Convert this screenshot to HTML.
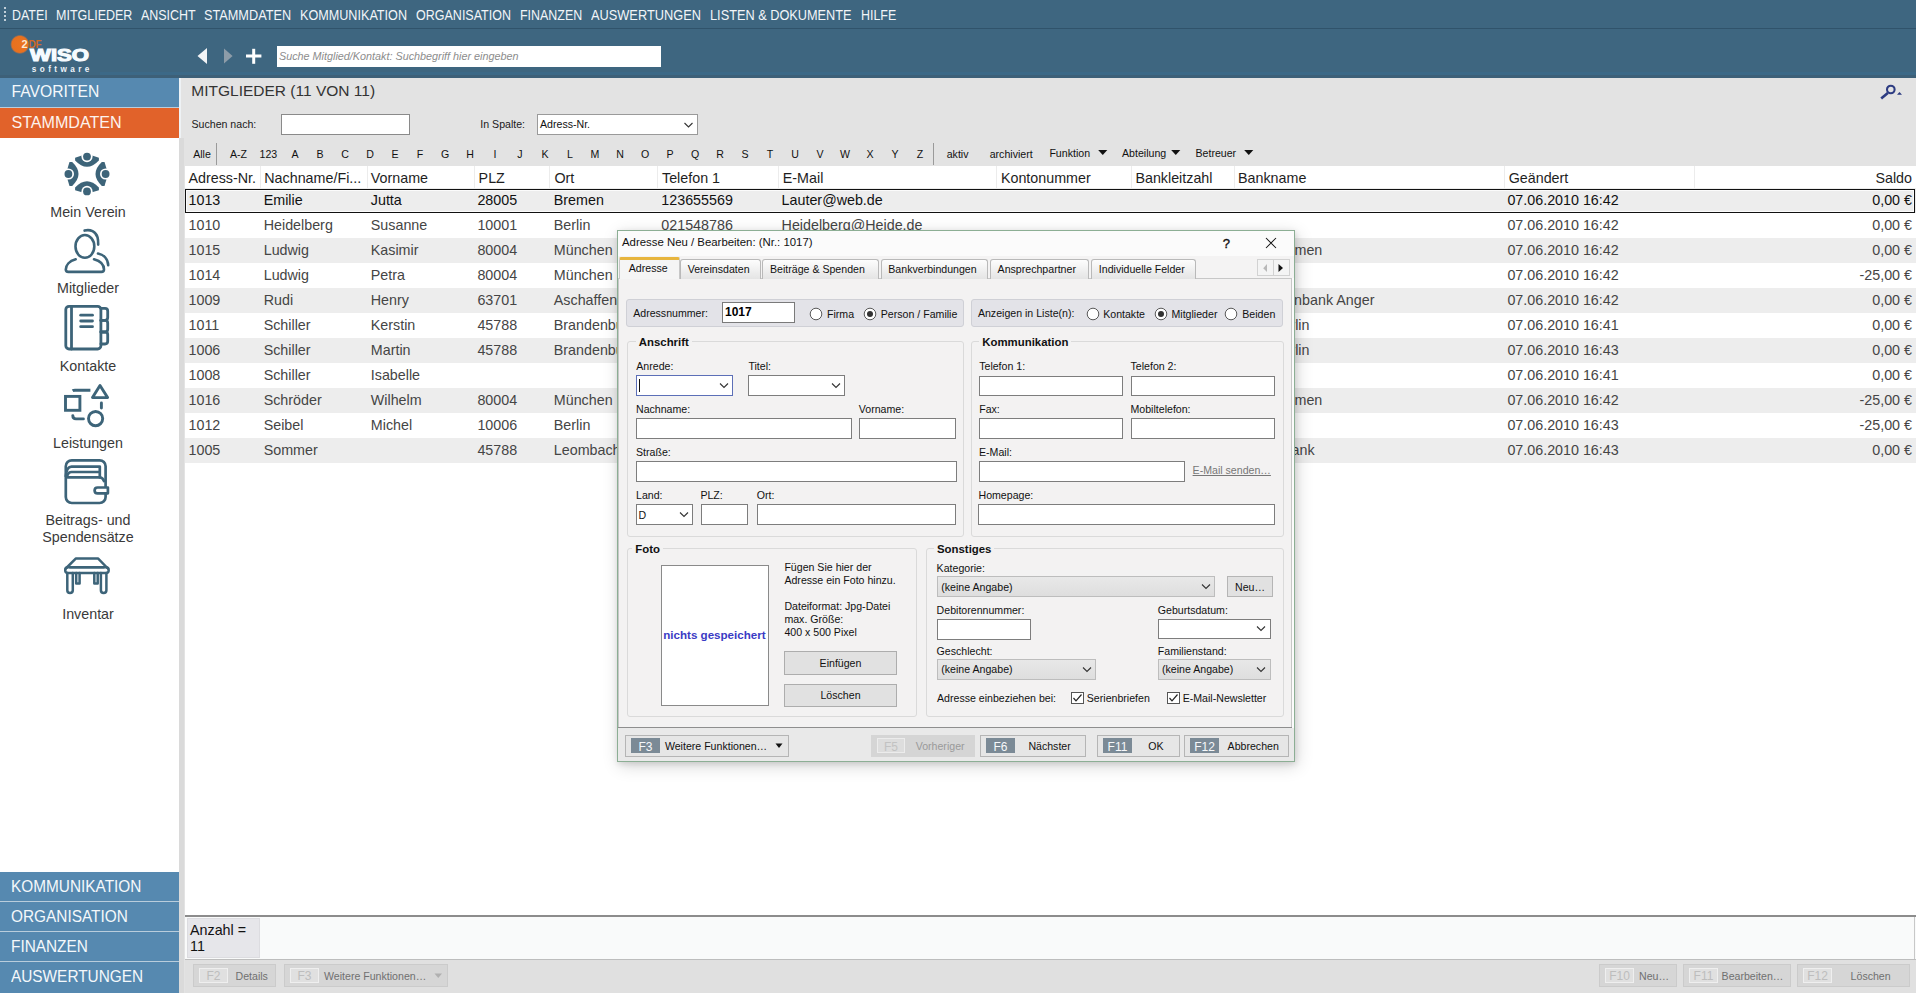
<!DOCTYPE html>
<html><head><meta charset="utf-8"><title>WISO Mein Verein</title>
<style>
html,body{margin:0;padding:0;}
body{width:1916px;height:993px;position:relative;overflow:hidden;background:#e3e3e3;font-family:"Liberation Sans",sans-serif;}
body>div,body>svg{position:absolute;}
</style></head><body>
<div style="left:0px;top:0px;width:1916px;height:28px;background:#3e6680;"></div>
<div style="left:0px;top:28px;width:1916px;height:1px;background:#30536b;"></div>
<div style="left:0px;top:29px;width:1916px;height:49px;background:#3e6680;"></div>
<div style="left:4px;top:7px;width:2px;height:2px;background:#eef3f7;border-radius:1px"></div>
<div style="left:4px;top:11px;width:2px;height:2px;background:#eef3f7;border-radius:1px"></div>
<div style="left:4px;top:15px;width:2px;height:2px;background:#eef3f7;border-radius:1px"></div>
<div style="left:4px;top:19px;width:2px;height:2px;background:#eef3f7;border-radius:1px"></div>
<div style="left:12.00px;top:8.35px;font-size:14px;line-height:14px;color:#f2f5f8;font-weight:normal;white-space:nowrap;transform:scaleX(0.8858200367018134);transform-origin:0 0;">DATEI</div>
<div style="left:56.40px;top:8.35px;font-size:14px;line-height:14px;color:#f2f5f8;font-weight:normal;white-space:nowrap;transform:scaleX(0.8928982304925038);transform-origin:0 0;">MITGLIEDER</div>
<div style="left:140.80px;top:8.35px;font-size:14px;line-height:14px;color:#f2f5f8;font-weight:normal;white-space:nowrap;transform:scaleX(0.8901681779115831);transform-origin:0 0;">ANSICHT</div>
<div style="left:204.30px;top:8.35px;font-size:14px;line-height:14px;color:#f2f5f8;font-weight:normal;white-space:nowrap;transform:scaleX(0.9080306238801105);transform-origin:0 0;">STAMMDATEN</div>
<div style="left:300.20px;top:8.35px;font-size:14px;line-height:14px;color:#f2f5f8;font-weight:normal;white-space:nowrap;transform:scaleX(0.9011308876823514);transform-origin:0 0;">KOMMUNIKATION</div>
<div style="left:416.30px;top:8.35px;font-size:14px;line-height:14px;color:#f2f5f8;font-weight:normal;white-space:nowrap;transform:scaleX(0.8936471681085546);transform-origin:0 0;">ORGANISATION</div>
<div style="left:520.20px;top:8.35px;font-size:14px;line-height:14px;color:#f2f5f8;font-weight:normal;white-space:nowrap;transform:scaleX(0.8885714285714276);transform-origin:0 0;">FINANZEN</div>
<div style="left:591.30px;top:8.35px;font-size:14px;line-height:14px;color:#f2f5f8;font-weight:normal;white-space:nowrap;transform:scaleX(0.9134877631913895);transform-origin:0 0;">AUSWERTUNGEN</div>
<div style="left:710.20px;top:8.35px;font-size:14px;line-height:14px;color:#f2f5f8;font-weight:normal;white-space:nowrap;transform:scaleX(0.9101463481261569);transform-origin:0 0;">LISTEN &amp; DOKUMENTE</div>
<div style="left:860.80px;top:8.35px;font-size:14px;line-height:14px;color:#f2f5f8;font-weight:normal;white-space:nowrap;transform:scaleX(0.8872155577784966);transform-origin:0 0;">HILFE</div>
<svg style="position:absolute;left:4px;top:30px;" width="40" height="30" viewBox="0 0 40 30"><defs><radialGradient id="og" cx="0.5" cy="0.5" r="0.5">
<stop offset="0" stop-color="#ea7420"/><stop offset="0.8" stop-color="#e8711f"/><stop offset="0.9" stop-color="#c8703a" stop-opacity="0.5"/><stop offset="1" stop-color="#3e6680" stop-opacity="0"/></radialGradient></defs>
<circle cx="15.9" cy="14.4" r="10" fill="url(#og)"/></svg>
<div style="left:21.60px;top:39.19px;font-size:11px;line-height:11px;color:#fdebd2;font-weight:bold;white-space:nowrap;">2</div>
<div style="left:28.40px;top:39.94px;font-size:10px;line-height:10px;color:#d26a26;font-weight:bold;white-space:nowrap;letter-spacing:-0.2px">DF</div>
<div style="left:30.30px;top:48.25px;font-size:16.6px;line-height:16.6px;color:#f6fbff;font-weight:bold;white-space:nowrap;transform:scaleX(1.332883391058668);transform-origin:0 0;-webkit-text-stroke:1.1px #f6fbff">WISO</div>
<div style="left:31.80px;top:66.26px;font-size:8.2px;line-height:8.2px;color:#eef4fa;font-weight:bold;white-space:nowrap;letter-spacing:3.4px">software</div>
<svg style="position:absolute;left:190px;top:44px;" width="80" height="24" viewBox="0 0 80 24">
<path d="M7.5 12 L17 4 L17 20 Z" fill="#f2f4f6"/>
<path d="M34 4.5 L42.6 12 L34 19.5 Z" fill="#8d9ca8"/>
<rect x="56" y="10.5" width="15.4" height="3" fill="#fff"/>
<rect x="62.2" y="4.8" width="3" height="15" fill="#fff"/>
</svg>
<div style="left:277px;top:46px;width:384px;height:21px;background:#fff;"></div>
<div style="left:100px;top:72px;width:1816px;height:3px;background:#3c6987;"></div>
<div style="left:0px;top:75px;width:1916px;height:3px;background:#3d6078;"></div>
<div style="left:279.00px;top:50.86px;font-size:10.8px;line-height:10.8px;color:#8c8c8c;font-weight:normal;white-space:nowrap;font-style:italic">Suche Mitglied/Kontakt: Suchbegriff hier eingeben</div>
<div style="left:0px;top:78px;width:179px;height:29px;background:#5689b0;"></div>
<div style="left:0px;top:107px;width:179px;height:1px;background:#b9cddc;"></div>
<div style="left:0px;top:108px;width:179px;height:30px;background:#e1622a;"></div>
<div style="left:0px;top:138px;width:179px;height:734px;background:#ffffff;"></div>
<div style="left:11.50px;top:84.41px;font-size:15.7px;line-height:15.7px;color:#f4f8fb;font-weight:normal;white-space:nowrap;">FAVORITEN</div>
<div style="left:11.40px;top:114.27px;font-size:16.1px;line-height:16.1px;color:#fdf3ee;font-weight:normal;white-space:nowrap;">STAMMDATEN</div>
<div style="left:0px;top:872px;width:179px;height:29px;background:#5689b0;"></div>
<div style="left:0px;top:901px;width:179px;height:1px;background:#b9cddc;"></div>
<div style="left:11.00px;top:878.91px;font-size:15.7px;line-height:15.7px;color:#f4f8fb;font-weight:normal;white-space:nowrap;transform:scaleX(0.98);transform-origin:0 0;">KOMMUNIKATION</div>
<div style="left:0px;top:902px;width:179px;height:29px;background:#5689b0;"></div>
<div style="left:0px;top:931px;width:179px;height:1px;background:#b9cddc;"></div>
<div style="left:11.00px;top:908.91px;font-size:15.7px;line-height:15.7px;color:#f4f8fb;font-weight:normal;white-space:nowrap;transform:scaleX(0.98);transform-origin:0 0;">ORGANISATION</div>
<div style="left:0px;top:932px;width:179px;height:29px;background:#5689b0;"></div>
<div style="left:0px;top:961px;width:179px;height:1px;background:#b9cddc;"></div>
<div style="left:11.00px;top:938.91px;font-size:15.7px;line-height:15.7px;color:#f4f8fb;font-weight:normal;white-space:nowrap;transform:scaleX(0.98);transform-origin:0 0;">FINANZEN</div>
<div style="left:0px;top:962px;width:179px;height:31px;background:#5689b0;"></div>
<div style="left:11.00px;top:968.91px;font-size:15.7px;line-height:15.7px;color:#f4f8fb;font-weight:normal;white-space:nowrap;transform:scaleX(0.98);transform-origin:0 0;">AUSWERTUNGEN</div>
<div style="left:179px;top:138px;width:5px;height:855px;background:#dadada;"></div>
<div style="left:179px;top:78px;width:2px;height:60px;background:#eef2f5;"></div>
<svg style="position:absolute;left:60px;top:147px;" width="54" height="54" viewBox="0 0 54 54"><g transform="translate(27,27)"><g transform="translate(0,0) rotate(0)"><path d="M-11.9,-16.3 Q0,-21.1 11.9,-16.3 L11.9,-13.6 Q0,-1.0 -11.9,-13.6 Z" fill="#3d6479"/><circle cx="0" cy="-17.4" r="5.6" fill="#fff"/><circle cx="0" cy="-17.4" r="3.9" fill="#3d6479"/></g><g transform="translate(1.2,0) rotate(90)"><path d="M-11.9,-16.3 Q0,-21.1 11.9,-16.3 L11.9,-13.6 Q0,-1.0 -11.9,-13.6 Z" fill="#3d6479"/><circle cx="0" cy="-17.4" r="5.6" fill="#fff"/><circle cx="0" cy="-17.4" r="3.9" fill="#3d6479"/></g><g transform="translate(0,0) rotate(180)"><path d="M-11.9,-16.3 Q0,-21.1 11.9,-16.3 L11.9,-13.6 Q0,-1.0 -11.9,-13.6 Z" fill="#3d6479"/><circle cx="0" cy="-17.4" r="5.6" fill="#fff"/><circle cx="0" cy="-17.4" r="3.9" fill="#3d6479"/></g><g transform="translate(-1.2,0) rotate(270)"><path d="M-11.9,-16.3 Q0,-21.1 11.9,-16.3 L11.9,-13.6 Q0,-1.0 -11.9,-13.6 Z" fill="#3d6479"/><circle cx="0" cy="-17.4" r="5.6" fill="#fff"/><circle cx="0" cy="-17.4" r="3.9" fill="#3d6479"/></g></g></svg>
<div style="left:0.00px;top:204.75px;font-size:14px;line-height:14px;color:#222;font-weight:normal;white-space:nowrap;"></div>
<div style="left:-12.00px;top:204.50px;width:200px;text-align:center;font-size:14.3px;line-height:14.3px;color:#3a3a3a;font-weight:normal;white-space:nowrap;">Mein Verein</div>
<svg style="position:absolute;left:60px;top:225px;" width="54" height="52" viewBox="0 0 54 52"><g fill="none" stroke="#3d6479" stroke-width="2.6" stroke-linecap="round">
<ellipse cx="24.9" cy="21.4" rx="9.4" ry="11.4"/>
<path d="M15.7,34.3 C9,36 5.8,40.5 5.8,44.6 Q5.8,46.9 8.4,46.9 L41.4,46.9 Q44,46.9 44,44.6 C44,40 40.5,36 34,34.3"/>
<path d="M24.6,5.6 C30,4 36,6.5 37.6,12.5 C38.2,15 38.2,17.5 38.2,19.6"/>
<path d="M38,28.5 C43.5,29.6 48,33.6 48.2,40.3"/>
</g></svg>
<div style="left:-12.00px;top:281.10px;width:200px;text-align:center;font-size:14.3px;line-height:14.3px;color:#3a3a3a;font-weight:normal;white-space:nowrap;">Mitglieder</div>
<svg style="position:absolute;left:60px;top:300px;" width="54" height="52" viewBox="0 0 54 52"><g fill="none" stroke="#3d6479" stroke-width="2.8" stroke-linecap="round" stroke-linejoin="round">
<rect x="5.8" y="6.3" width="35.1" height="42.7" rx="3.2"/>
<line x1="11.5" y1="6.3" x2="11.5" y2="49"/>
<line x1="20.7" y1="15.2" x2="32.5" y2="15.2"/>
<line x1="20.7" y1="21" x2="32.5" y2="21"/>
<line x1="20.7" y1="26.7" x2="32.5" y2="26.7"/>
<path d="M40.9,8.4 L45,8.4 Q47.7,8.4 47.7,11 L47.7,17.6 Q47.7,20.4 45,20.4 L40.9,20.4"/>
<path d="M40.9,20.4 L45,20.4 Q47.7,20.4 47.7,23 L47.7,29.3 Q47.7,32 45,32 L40.9,32"/>
<path d="M40.9,32 L45,32 Q47.7,32 47.7,34.6 L47.7,41.3 Q47.7,44 45,44 L40.9,44"/>
</g></svg>
<div style="left:-12.00px;top:358.70px;width:200px;text-align:center;font-size:14.3px;line-height:14.3px;color:#3a3a3a;font-weight:normal;white-space:nowrap;">Kontakte</div>
<svg style="position:absolute;left:60px;top:377px;" width="54" height="52" viewBox="0 0 54 52"><g fill="none" stroke="#3d6479" stroke-width="2.9" stroke-linecap="round" stroke-linejoin="miter">
<rect x="5.5" y="19.4" width="14.4" height="13.9"/>
<path d="M12.6,13.8 Q13.5,13.2 15,13.2 L30.4,13.2" stroke-linecap="butt"/>
<path d="M40,8.4 L47.6,20.6 L32.5,20.6 Z" stroke-linejoin="round"/>
<line x1="41.4" y1="26" x2="41.4" y2="31"/>
<circle cx="35.6" cy="41.6" r="7.1"/>
<path d="M12.8,38.6 Q12.8,41.9 16,41.9 L23.4,41.9"/>
</g></svg>
<div style="left:-12.00px;top:435.90px;width:200px;text-align:center;font-size:14.3px;line-height:14.3px;color:#3a3a3a;font-weight:normal;white-space:nowrap;">Leistungen</div>
<svg style="position:absolute;left:60px;top:454px;" width="54" height="52" viewBox="0 0 54 52"><g fill="none" stroke="#3d6479" stroke-width="2.7" stroke-linecap="round" stroke-linejoin="round">
<rect x="5.8" y="6.3" width="39.8" height="42.7" rx="6"/>
<path d="M5.8,22 Q6.5,12.6 11.5,12.6 L39.8,12.6 L39.8,23.4"/>
<path d="M7.5,21 Q8.5,18 11.5,18 L38.8,18"/>
<path d="M7.5,23.3 L39.8,23.3 Q43,24 44,27"/>
<path d="M47.9,33.5 L37.6,33.5 Q34.6,33.5 34.6,36.4 Q34.6,39.3 37.6,39.3 L47.9,39.3 Z" fill="#fff"/>
</g></svg>
<div style="left:-12.00px;top:512.50px;width:200px;text-align:center;font-size:14.3px;line-height:14.3px;color:#3a3a3a;font-weight:normal;white-space:nowrap;">Beitrags- und</div>
<div style="left:-12.00px;top:529.50px;width:200px;text-align:center;font-size:14.3px;line-height:14.3px;color:#3a3a3a;font-weight:normal;white-space:nowrap;">Spendensätze</div>
<svg style="position:absolute;left:60px;top:550px;" width="54" height="52" viewBox="0 0 54 52"><g fill="none" stroke="#3d6479" stroke-width="2.5" stroke-linecap="round" stroke-linejoin="round">
<path d="M5.8,18.5 L15.7,8.6 L38.2,8.6 L47.9,18.5"/>
<line x1="10" y1="17.3" x2="43.6" y2="17.3"/>
<rect x="5.2" y="17.3" width="43.5" height="5.7" rx="2.85"/>
<path d="M7.3,23 L7.3,40.3 Q7.3,43 10,43 Q12.8,43 12.8,40.3 L12.8,23"/>
<path d="M40.9,23 L40.9,40.3 Q40.9,43 43.6,43 Q46.4,43 46.4,40.3 L46.4,23"/>
<path d="M16.2,23 L16.2,33.4 L19.6,33.4 L19.6,23"/>
<path d="M34.3,23 L34.3,33.4 L37.7,33.4 L37.7,23"/>
</g></svg>
<div style="left:-12.00px;top:606.70px;width:200px;text-align:center;font-size:14.3px;line-height:14.3px;color:#3a3a3a;font-weight:normal;white-space:nowrap;">Inventar</div>
<div style="left:185px;top:78px;width:1731px;height:88px;background:#e3e3e3;"></div>
<div style="left:191.30px;top:82.68px;font-size:15.5px;line-height:15.5px;color:#333;font-weight:normal;white-space:nowrap;">MITGLIEDER (11 VON 11)</div>
<svg style="position:absolute;left:1878px;top:83px;" width="28" height="20" viewBox="0 0 28 20"><g fill="none" stroke="#2d3c82"><circle cx="12.8" cy="6.5" r="3.8" stroke-width="2.1"/><line x1="9.8" y1="10" x2="3.2" y2="15.6" stroke-width="2.6"/></g><path d="M19.0 11.7 L24.0 11.7 L21.5 9.0 Z" fill="#2d3c82"/></svg>
<div style="left:191.50px;top:118.73px;font-size:10.6px;line-height:10.6px;color:#1a1a1a;font-weight:normal;white-space:nowrap;">Suchen nach:</div>
<div style="left:281px;top:114px;width:129px;height:21px;background:#fff;border:1px solid #8a8a8a;box-sizing:border-box;"></div>
<div style="left:480.30px;top:119.23px;font-size:10.6px;line-height:10.6px;color:#1a1a1a;font-weight:normal;white-space:nowrap;">In Spalte:</div>
<div style="left:537px;top:114px;width:161px;height:21px;background:#fff;border:1px solid #9a9a9a;box-sizing:border-box;"></div>
<div style="left:540.00px;top:119.23px;font-size:10.6px;line-height:10.6px;color:#111;font-weight:normal;white-space:nowrap;">Adress-Nr.</div>
<svg style="position:absolute;left:683px;top:120px;" width="12" height="10" viewBox="0 0 12 10"><path d="M1.5 3 L5.5 7 L9.5 3" fill="none" stroke="#333" stroke-width="1.1"/></svg>
<div style="left:193.20px;top:148.93px;font-size:10.6px;line-height:10.6px;color:#111;font-weight:normal;white-space:nowrap;">Alle</div>
<div style="left:216px;top:143px;width:1px;height:22px;background:#9a9a9a;"></div>
<div style="left:230.00px;top:148.93px;font-size:10.6px;line-height:10.6px;color:#111;font-weight:normal;white-space:nowrap;">A-Z</div>
<div style="left:259.50px;top:148.93px;font-size:10.6px;line-height:10.6px;color:#111;font-weight:normal;white-space:nowrap;">123</div>
<div style="left:285.00px;top:148.93px;width:20px;text-align:center;font-size:10.6px;line-height:10.6px;color:#111;font-weight:normal;white-space:nowrap;">A</div>
<div style="left:310.00px;top:148.93px;width:20px;text-align:center;font-size:10.6px;line-height:10.6px;color:#111;font-weight:normal;white-space:nowrap;">B</div>
<div style="left:335.00px;top:148.93px;width:20px;text-align:center;font-size:10.6px;line-height:10.6px;color:#111;font-weight:normal;white-space:nowrap;">C</div>
<div style="left:360.00px;top:148.93px;width:20px;text-align:center;font-size:10.6px;line-height:10.6px;color:#111;font-weight:normal;white-space:nowrap;">D</div>
<div style="left:385.00px;top:148.93px;width:20px;text-align:center;font-size:10.6px;line-height:10.6px;color:#111;font-weight:normal;white-space:nowrap;">E</div>
<div style="left:410.00px;top:148.93px;width:20px;text-align:center;font-size:10.6px;line-height:10.6px;color:#111;font-weight:normal;white-space:nowrap;">F</div>
<div style="left:435.00px;top:148.93px;width:20px;text-align:center;font-size:10.6px;line-height:10.6px;color:#111;font-weight:normal;white-space:nowrap;">G</div>
<div style="left:460.00px;top:148.93px;width:20px;text-align:center;font-size:10.6px;line-height:10.6px;color:#111;font-weight:normal;white-space:nowrap;">H</div>
<div style="left:485.00px;top:148.93px;width:20px;text-align:center;font-size:10.6px;line-height:10.6px;color:#111;font-weight:normal;white-space:nowrap;">I</div>
<div style="left:510.00px;top:148.93px;width:20px;text-align:center;font-size:10.6px;line-height:10.6px;color:#111;font-weight:normal;white-space:nowrap;">J</div>
<div style="left:535.00px;top:148.93px;width:20px;text-align:center;font-size:10.6px;line-height:10.6px;color:#111;font-weight:normal;white-space:nowrap;">K</div>
<div style="left:560.00px;top:148.93px;width:20px;text-align:center;font-size:10.6px;line-height:10.6px;color:#111;font-weight:normal;white-space:nowrap;">L</div>
<div style="left:585.00px;top:148.93px;width:20px;text-align:center;font-size:10.6px;line-height:10.6px;color:#111;font-weight:normal;white-space:nowrap;">M</div>
<div style="left:610.00px;top:148.93px;width:20px;text-align:center;font-size:10.6px;line-height:10.6px;color:#111;font-weight:normal;white-space:nowrap;">N</div>
<div style="left:635.00px;top:148.93px;width:20px;text-align:center;font-size:10.6px;line-height:10.6px;color:#111;font-weight:normal;white-space:nowrap;">O</div>
<div style="left:660.00px;top:148.93px;width:20px;text-align:center;font-size:10.6px;line-height:10.6px;color:#111;font-weight:normal;white-space:nowrap;">P</div>
<div style="left:685.00px;top:148.93px;width:20px;text-align:center;font-size:10.6px;line-height:10.6px;color:#111;font-weight:normal;white-space:nowrap;">Q</div>
<div style="left:710.00px;top:148.93px;width:20px;text-align:center;font-size:10.6px;line-height:10.6px;color:#111;font-weight:normal;white-space:nowrap;">R</div>
<div style="left:735.00px;top:148.93px;width:20px;text-align:center;font-size:10.6px;line-height:10.6px;color:#111;font-weight:normal;white-space:nowrap;">S</div>
<div style="left:760.00px;top:148.93px;width:20px;text-align:center;font-size:10.6px;line-height:10.6px;color:#111;font-weight:normal;white-space:nowrap;">T</div>
<div style="left:785.00px;top:148.93px;width:20px;text-align:center;font-size:10.6px;line-height:10.6px;color:#111;font-weight:normal;white-space:nowrap;">U</div>
<div style="left:810.00px;top:148.93px;width:20px;text-align:center;font-size:10.6px;line-height:10.6px;color:#111;font-weight:normal;white-space:nowrap;">V</div>
<div style="left:835.00px;top:148.93px;width:20px;text-align:center;font-size:10.6px;line-height:10.6px;color:#111;font-weight:normal;white-space:nowrap;">W</div>
<div style="left:860.00px;top:148.93px;width:20px;text-align:center;font-size:10.6px;line-height:10.6px;color:#111;font-weight:normal;white-space:nowrap;">X</div>
<div style="left:885.00px;top:148.93px;width:20px;text-align:center;font-size:10.6px;line-height:10.6px;color:#111;font-weight:normal;white-space:nowrap;">Y</div>
<div style="left:910.00px;top:148.93px;width:20px;text-align:center;font-size:10.6px;line-height:10.6px;color:#111;font-weight:normal;white-space:nowrap;">Z</div>
<div style="left:933px;top:143px;width:1px;height:22px;background:#9a9a9a;"></div>
<div style="left:946.70px;top:148.93px;font-size:10.6px;line-height:10.6px;color:#111;font-weight:normal;white-space:nowrap;">aktiv</div>
<div style="left:989.70px;top:148.93px;font-size:10.6px;line-height:10.6px;color:#111;font-weight:normal;white-space:nowrap;">archiviert</div>
<div style="left:1049.40px;top:148.23px;font-size:10.6px;line-height:10.6px;color:#111;font-weight:normal;white-space:nowrap;">Funktion</div>
<svg style="position:absolute;left:1098px;top:149px;" width="10" height="7" viewBox="0 0 10 7"><path d="M0.2 1 L9.3 1 L4.75 6 Z" fill="#111"/></svg>
<div style="left:1122.00px;top:148.23px;font-size:10.6px;line-height:10.6px;color:#111;font-weight:normal;white-space:nowrap;">Abteilung</div>
<svg style="position:absolute;left:1171px;top:149px;" width="10" height="7" viewBox="0 0 10 7"><path d="M0.2 1 L9.3 1 L4.75 6 Z" fill="#111"/></svg>
<div style="left:1195.50px;top:148.23px;font-size:10.6px;line-height:10.6px;color:#111;font-weight:normal;white-space:nowrap;">Betreuer</div>
<svg style="position:absolute;left:1244px;top:149px;" width="10" height="7" viewBox="0 0 10 7"><path d="M0.2 1 L9.3 1 L4.75 6 Z" fill="#111"/></svg>
<div style="left:185px;top:166px;width:1731px;height:749px;background:#ffffff;"></div>
<div style="left:260px;top:166px;width:1px;height:22px;background:#ececec;"></div>
<div style="left:367px;top:166px;width:1px;height:22px;background:#ececec;"></div>
<div style="left:474px;top:166px;width:1px;height:22px;background:#ececec;"></div>
<div style="left:549px;top:166px;width:1px;height:22px;background:#ececec;"></div>
<div style="left:657px;top:166px;width:1px;height:22px;background:#ececec;"></div>
<div style="left:778px;top:166px;width:1px;height:22px;background:#ececec;"></div>
<div style="left:996px;top:166px;width:1px;height:22px;background:#ececec;"></div>
<div style="left:1131px;top:166px;width:1px;height:22px;background:#ececec;"></div>
<div style="left:1234px;top:166px;width:1px;height:22px;background:#ececec;"></div>
<div style="left:1504px;top:166px;width:1px;height:22px;background:#ececec;"></div>
<div style="left:1694px;top:166px;width:1px;height:22px;background:#ececec;"></div>
<div style="left:188.50px;top:171.10px;font-size:14.3px;line-height:14.3px;color:#1e1e1e;font-weight:normal;white-space:nowrap;">Adress-Nr.</div>
<div style="left:264.30px;top:171.10px;font-size:14.3px;line-height:14.3px;color:#1e1e1e;font-weight:normal;white-space:nowrap;">Nachname/Fi...</div>
<div style="left:370.80px;top:171.10px;font-size:14.3px;line-height:14.3px;color:#1e1e1e;font-weight:normal;white-space:nowrap;">Vorname</div>
<div style="left:478.60px;top:171.10px;font-size:14.3px;line-height:14.3px;color:#1e1e1e;font-weight:normal;white-space:nowrap;">PLZ</div>
<div style="left:554.40px;top:171.10px;font-size:14.3px;line-height:14.3px;color:#1e1e1e;font-weight:normal;white-space:nowrap;">Ort</div>
<div style="left:662.00px;top:171.10px;font-size:14.3px;line-height:14.3px;color:#1e1e1e;font-weight:normal;white-space:nowrap;">Telefon 1</div>
<div style="left:782.80px;top:171.10px;font-size:14.3px;line-height:14.3px;color:#1e1e1e;font-weight:normal;white-space:nowrap;">E-Mail</div>
<div style="left:1000.90px;top:171.10px;font-size:14.3px;line-height:14.3px;color:#1e1e1e;font-weight:normal;white-space:nowrap;">Kontonummer</div>
<div style="left:1135.40px;top:171.10px;font-size:14.3px;line-height:14.3px;color:#1e1e1e;font-weight:normal;white-space:nowrap;">Bankleitzahl</div>
<div style="left:1238.00px;top:171.10px;font-size:14.3px;line-height:14.3px;color:#1e1e1e;font-weight:normal;white-space:nowrap;">Bankname</div>
<div style="left:1508.70px;top:171.10px;font-size:14.3px;line-height:14.3px;color:#1e1e1e;font-weight:normal;white-space:nowrap;">Geändert</div>
<div style="right:4.00px;top:171.10px;font-size:14.3px;line-height:14.3px;color:#1e1e1e;font-weight:normal;white-space:nowrap;text-align:right;">Saldo</div>
<div style="left:185px;top:188px;width:1731px;height:25px;background:#ededed;"></div>
<div style="left:188.50px;top:192.90px;font-size:14.3px;line-height:14.3px;color:#111;font-weight:normal;white-space:nowrap;">1013</div>
<div style="left:263.70px;top:192.90px;font-size:14.3px;line-height:14.3px;color:#111;font-weight:normal;white-space:nowrap;">Emilie</div>
<div style="left:370.80px;top:192.90px;font-size:14.3px;line-height:14.3px;color:#111;font-weight:normal;white-space:nowrap;">Jutta</div>
<div style="left:477.40px;top:192.90px;font-size:14.3px;line-height:14.3px;color:#111;font-weight:normal;white-space:nowrap;">28005</div>
<div style="left:553.80px;top:192.90px;font-size:14.3px;line-height:14.3px;color:#111;font-weight:normal;white-space:nowrap;">Bremen</div>
<div style="left:661.30px;top:192.90px;font-size:14.3px;line-height:14.3px;color:#111;font-weight:normal;white-space:nowrap;">123655569</div>
<div style="left:781.60px;top:192.90px;font-size:14.3px;line-height:14.3px;color:#111;font-weight:normal;white-space:nowrap;">Lauter@web.de</div>
<div style="left:1507.40px;top:192.90px;font-size:14.3px;line-height:14.3px;color:#111;font-weight:normal;white-space:nowrap;">07.06.2010 16:42</div>
<div style="right:4.00px;top:192.90px;font-size:14.3px;line-height:14.3px;color:#111;font-weight:normal;white-space:nowrap;text-align:right;">0,00 €</div>
<div style="left:188.50px;top:217.90px;font-size:14.3px;line-height:14.3px;color:#454545;font-weight:normal;white-space:nowrap;">1010</div>
<div style="left:263.70px;top:217.90px;font-size:14.3px;line-height:14.3px;color:#454545;font-weight:normal;white-space:nowrap;">Heidelberg</div>
<div style="left:370.80px;top:217.90px;font-size:14.3px;line-height:14.3px;color:#454545;font-weight:normal;white-space:nowrap;">Susanne</div>
<div style="left:477.40px;top:217.90px;font-size:14.3px;line-height:14.3px;color:#454545;font-weight:normal;white-space:nowrap;">10001</div>
<div style="left:553.80px;top:217.90px;font-size:14.3px;line-height:14.3px;color:#454545;font-weight:normal;white-space:nowrap;">Berlin</div>
<div style="left:661.30px;top:217.90px;font-size:14.3px;line-height:14.3px;color:#454545;font-weight:normal;white-space:nowrap;">021548786</div>
<div style="left:781.60px;top:217.90px;font-size:14.3px;line-height:14.3px;color:#454545;font-weight:normal;white-space:nowrap;">Heidelberg@Heide.de</div>
<div style="left:1507.40px;top:217.90px;font-size:14.3px;line-height:14.3px;color:#454545;font-weight:normal;white-space:nowrap;">07.06.2010 16:42</div>
<div style="right:4.00px;top:217.90px;font-size:14.3px;line-height:14.3px;color:#454545;font-weight:normal;white-space:nowrap;text-align:right;">0,00 €</div>
<div style="left:185px;top:238px;width:1731px;height:25px;background:#ededed;"></div>
<div style="left:188.50px;top:242.90px;font-size:14.3px;line-height:14.3px;color:#454545;font-weight:normal;white-space:nowrap;">1015</div>
<div style="left:263.70px;top:242.90px;font-size:14.3px;line-height:14.3px;color:#454545;font-weight:normal;white-space:nowrap;">Ludwig</div>
<div style="left:370.80px;top:242.90px;font-size:14.3px;line-height:14.3px;color:#454545;font-weight:normal;white-space:nowrap;">Kasimir</div>
<div style="left:477.40px;top:242.90px;font-size:14.3px;line-height:14.3px;color:#454545;font-weight:normal;white-space:nowrap;">80004</div>
<div style="left:553.80px;top:242.90px;font-size:14.3px;line-height:14.3px;color:#454545;font-weight:normal;white-space:nowrap;">München</div>
<div style="left:661.30px;top:242.90px;font-size:14.3px;line-height:14.3px;color:#454545;font-weight:normal;white-space:nowrap;"></div>
<div style="left:781.60px;top:242.90px;font-size:14.3px;line-height:14.3px;color:#454545;font-weight:normal;white-space:nowrap;"></div>
<div style="right:593.70px;top:242.90px;font-size:14.3px;line-height:14.3px;color:#454545;font-weight:normal;white-space:nowrap;text-align:right;">Stadtsparkasse Bremen</div>
<div style="left:1507.40px;top:242.90px;font-size:14.3px;line-height:14.3px;color:#454545;font-weight:normal;white-space:nowrap;">07.06.2010 16:42</div>
<div style="right:4.00px;top:242.90px;font-size:14.3px;line-height:14.3px;color:#454545;font-weight:normal;white-space:nowrap;text-align:right;">0,00 €</div>
<div style="left:188.50px;top:267.90px;font-size:14.3px;line-height:14.3px;color:#454545;font-weight:normal;white-space:nowrap;">1014</div>
<div style="left:263.70px;top:267.90px;font-size:14.3px;line-height:14.3px;color:#454545;font-weight:normal;white-space:nowrap;">Ludwig</div>
<div style="left:370.80px;top:267.90px;font-size:14.3px;line-height:14.3px;color:#454545;font-weight:normal;white-space:nowrap;">Petra</div>
<div style="left:477.40px;top:267.90px;font-size:14.3px;line-height:14.3px;color:#454545;font-weight:normal;white-space:nowrap;">80004</div>
<div style="left:553.80px;top:267.90px;font-size:14.3px;line-height:14.3px;color:#454545;font-weight:normal;white-space:nowrap;">München</div>
<div style="left:661.30px;top:267.90px;font-size:14.3px;line-height:14.3px;color:#454545;font-weight:normal;white-space:nowrap;"></div>
<div style="left:781.60px;top:267.90px;font-size:14.3px;line-height:14.3px;color:#454545;font-weight:normal;white-space:nowrap;"></div>
<div style="left:1507.40px;top:267.90px;font-size:14.3px;line-height:14.3px;color:#454545;font-weight:normal;white-space:nowrap;">07.06.2010 16:42</div>
<div style="right:4.00px;top:267.90px;font-size:14.3px;line-height:14.3px;color:#454545;font-weight:normal;white-space:nowrap;text-align:right;">-25,00 €</div>
<div style="left:185px;top:288px;width:1731px;height:25px;background:#ededed;"></div>
<div style="left:188.50px;top:292.90px;font-size:14.3px;line-height:14.3px;color:#454545;font-weight:normal;white-space:nowrap;">1009</div>
<div style="left:263.70px;top:292.90px;font-size:14.3px;line-height:14.3px;color:#454545;font-weight:normal;white-space:nowrap;">Rudi</div>
<div style="left:370.80px;top:292.90px;font-size:14.3px;line-height:14.3px;color:#454545;font-weight:normal;white-space:nowrap;">Henry</div>
<div style="left:477.40px;top:292.90px;font-size:14.3px;line-height:14.3px;color:#454545;font-weight:normal;white-space:nowrap;">63701</div>
<div style="left:553.80px;top:292.90px;font-size:14.3px;line-height:14.3px;color:#454545;font-weight:normal;white-space:nowrap;">Aschaffenburg</div>
<div style="left:661.30px;top:292.90px;font-size:14.3px;line-height:14.3px;color:#454545;font-weight:normal;white-space:nowrap;"></div>
<div style="left:781.60px;top:292.90px;font-size:14.3px;line-height:14.3px;color:#454545;font-weight:normal;white-space:nowrap;"></div>
<div style="right:541.60px;top:292.90px;font-size:14.3px;line-height:14.3px;color:#454545;font-weight:normal;white-space:nowrap;text-align:right;">Raiffeisenbank Anger</div>
<div style="left:1507.40px;top:292.90px;font-size:14.3px;line-height:14.3px;color:#454545;font-weight:normal;white-space:nowrap;">07.06.2010 16:42</div>
<div style="right:4.00px;top:292.90px;font-size:14.3px;line-height:14.3px;color:#454545;font-weight:normal;white-space:nowrap;text-align:right;">0,00 €</div>
<div style="left:188.50px;top:317.90px;font-size:14.3px;line-height:14.3px;color:#454545;font-weight:normal;white-space:nowrap;">1011</div>
<div style="left:263.70px;top:317.90px;font-size:14.3px;line-height:14.3px;color:#454545;font-weight:normal;white-space:nowrap;">Schiller</div>
<div style="left:370.80px;top:317.90px;font-size:14.3px;line-height:14.3px;color:#454545;font-weight:normal;white-space:nowrap;">Kerstin</div>
<div style="left:477.40px;top:317.90px;font-size:14.3px;line-height:14.3px;color:#454545;font-weight:normal;white-space:nowrap;">45788</div>
<div style="left:553.80px;top:317.90px;font-size:14.3px;line-height:14.3px;color:#454545;font-weight:normal;white-space:nowrap;">Brandenburg</div>
<div style="left:661.30px;top:317.90px;font-size:14.3px;line-height:14.3px;color:#454545;font-weight:normal;white-space:nowrap;"></div>
<div style="left:781.60px;top:317.90px;font-size:14.3px;line-height:14.3px;color:#454545;font-weight:normal;white-space:nowrap;"></div>
<div style="right:606.50px;top:317.90px;font-size:14.3px;line-height:14.3px;color:#454545;font-weight:normal;white-space:nowrap;text-align:right;">Berliner Bank Berlin</div>
<div style="left:1507.40px;top:317.90px;font-size:14.3px;line-height:14.3px;color:#454545;font-weight:normal;white-space:nowrap;">07.06.2010 16:41</div>
<div style="right:4.00px;top:317.90px;font-size:14.3px;line-height:14.3px;color:#454545;font-weight:normal;white-space:nowrap;text-align:right;">0,00 €</div>
<div style="left:185px;top:338px;width:1731px;height:25px;background:#ededed;"></div>
<div style="left:188.50px;top:342.90px;font-size:14.3px;line-height:14.3px;color:#454545;font-weight:normal;white-space:nowrap;">1006</div>
<div style="left:263.70px;top:342.90px;font-size:14.3px;line-height:14.3px;color:#454545;font-weight:normal;white-space:nowrap;">Schiller</div>
<div style="left:370.80px;top:342.90px;font-size:14.3px;line-height:14.3px;color:#454545;font-weight:normal;white-space:nowrap;">Martin</div>
<div style="left:477.40px;top:342.90px;font-size:14.3px;line-height:14.3px;color:#454545;font-weight:normal;white-space:nowrap;">45788</div>
<div style="left:553.80px;top:342.90px;font-size:14.3px;line-height:14.3px;color:#454545;font-weight:normal;white-space:nowrap;">Brandenburg</div>
<div style="left:661.30px;top:342.90px;font-size:14.3px;line-height:14.3px;color:#454545;font-weight:normal;white-space:nowrap;"></div>
<div style="left:781.60px;top:342.90px;font-size:14.3px;line-height:14.3px;color:#454545;font-weight:normal;white-space:nowrap;"></div>
<div style="right:606.50px;top:342.90px;font-size:14.3px;line-height:14.3px;color:#454545;font-weight:normal;white-space:nowrap;text-align:right;">Berliner Bank Berlin</div>
<div style="left:1507.40px;top:342.90px;font-size:14.3px;line-height:14.3px;color:#454545;font-weight:normal;white-space:nowrap;">07.06.2010 16:43</div>
<div style="right:4.00px;top:342.90px;font-size:14.3px;line-height:14.3px;color:#454545;font-weight:normal;white-space:nowrap;text-align:right;">0,00 €</div>
<div style="left:188.50px;top:367.90px;font-size:14.3px;line-height:14.3px;color:#454545;font-weight:normal;white-space:nowrap;">1008</div>
<div style="left:263.70px;top:367.90px;font-size:14.3px;line-height:14.3px;color:#454545;font-weight:normal;white-space:nowrap;">Schiller</div>
<div style="left:370.80px;top:367.90px;font-size:14.3px;line-height:14.3px;color:#454545;font-weight:normal;white-space:nowrap;">Isabelle</div>
<div style="left:477.40px;top:367.90px;font-size:14.3px;line-height:14.3px;color:#454545;font-weight:normal;white-space:nowrap;"></div>
<div style="left:553.80px;top:367.90px;font-size:14.3px;line-height:14.3px;color:#454545;font-weight:normal;white-space:nowrap;"></div>
<div style="left:661.30px;top:367.90px;font-size:14.3px;line-height:14.3px;color:#454545;font-weight:normal;white-space:nowrap;"></div>
<div style="left:781.60px;top:367.90px;font-size:14.3px;line-height:14.3px;color:#454545;font-weight:normal;white-space:nowrap;"></div>
<div style="left:1507.40px;top:367.90px;font-size:14.3px;line-height:14.3px;color:#454545;font-weight:normal;white-space:nowrap;">07.06.2010 16:41</div>
<div style="right:4.00px;top:367.90px;font-size:14.3px;line-height:14.3px;color:#454545;font-weight:normal;white-space:nowrap;text-align:right;">0,00 €</div>
<div style="left:185px;top:388px;width:1731px;height:25px;background:#ededed;"></div>
<div style="left:188.50px;top:392.90px;font-size:14.3px;line-height:14.3px;color:#454545;font-weight:normal;white-space:nowrap;">1016</div>
<div style="left:263.70px;top:392.90px;font-size:14.3px;line-height:14.3px;color:#454545;font-weight:normal;white-space:nowrap;">Schröder</div>
<div style="left:370.80px;top:392.90px;font-size:14.3px;line-height:14.3px;color:#454545;font-weight:normal;white-space:nowrap;">Wilhelm</div>
<div style="left:477.40px;top:392.90px;font-size:14.3px;line-height:14.3px;color:#454545;font-weight:normal;white-space:nowrap;">80004</div>
<div style="left:553.80px;top:392.90px;font-size:14.3px;line-height:14.3px;color:#454545;font-weight:normal;white-space:nowrap;">München</div>
<div style="left:661.30px;top:392.90px;font-size:14.3px;line-height:14.3px;color:#454545;font-weight:normal;white-space:nowrap;"></div>
<div style="left:781.60px;top:392.90px;font-size:14.3px;line-height:14.3px;color:#454545;font-weight:normal;white-space:nowrap;"></div>
<div style="right:593.70px;top:392.90px;font-size:14.3px;line-height:14.3px;color:#454545;font-weight:normal;white-space:nowrap;text-align:right;">Stadtsparkasse Bremen</div>
<div style="left:1507.40px;top:392.90px;font-size:14.3px;line-height:14.3px;color:#454545;font-weight:normal;white-space:nowrap;">07.06.2010 16:42</div>
<div style="right:4.00px;top:392.90px;font-size:14.3px;line-height:14.3px;color:#454545;font-weight:normal;white-space:nowrap;text-align:right;">-25,00 €</div>
<div style="left:188.50px;top:417.90px;font-size:14.3px;line-height:14.3px;color:#454545;font-weight:normal;white-space:nowrap;">1012</div>
<div style="left:263.70px;top:417.90px;font-size:14.3px;line-height:14.3px;color:#454545;font-weight:normal;white-space:nowrap;">Seibel</div>
<div style="left:370.80px;top:417.90px;font-size:14.3px;line-height:14.3px;color:#454545;font-weight:normal;white-space:nowrap;">Michel</div>
<div style="left:477.40px;top:417.90px;font-size:14.3px;line-height:14.3px;color:#454545;font-weight:normal;white-space:nowrap;">10006</div>
<div style="left:553.80px;top:417.90px;font-size:14.3px;line-height:14.3px;color:#454545;font-weight:normal;white-space:nowrap;">Berlin</div>
<div style="left:661.30px;top:417.90px;font-size:14.3px;line-height:14.3px;color:#454545;font-weight:normal;white-space:nowrap;"></div>
<div style="left:781.60px;top:417.90px;font-size:14.3px;line-height:14.3px;color:#454545;font-weight:normal;white-space:nowrap;"></div>
<div style="left:1507.40px;top:417.90px;font-size:14.3px;line-height:14.3px;color:#454545;font-weight:normal;white-space:nowrap;">07.06.2010 16:43</div>
<div style="right:4.00px;top:417.90px;font-size:14.3px;line-height:14.3px;color:#454545;font-weight:normal;white-space:nowrap;text-align:right;">-25,00 €</div>
<div style="left:185px;top:438px;width:1731px;height:25px;background:#ededed;"></div>
<div style="left:188.50px;top:442.90px;font-size:14.3px;line-height:14.3px;color:#454545;font-weight:normal;white-space:nowrap;">1005</div>
<div style="left:263.70px;top:442.90px;font-size:14.3px;line-height:14.3px;color:#454545;font-weight:normal;white-space:nowrap;">Sommer</div>
<div style="left:370.80px;top:442.90px;font-size:14.3px;line-height:14.3px;color:#454545;font-weight:normal;white-space:nowrap;"></div>
<div style="left:477.40px;top:442.90px;font-size:14.3px;line-height:14.3px;color:#454545;font-weight:normal;white-space:nowrap;">45788</div>
<div style="left:553.80px;top:442.90px;font-size:14.3px;line-height:14.3px;color:#454545;font-weight:normal;white-space:nowrap;">Leombach</div>
<div style="left:661.30px;top:442.90px;font-size:14.3px;line-height:14.3px;color:#454545;font-weight:normal;white-space:nowrap;"></div>
<div style="left:781.60px;top:442.90px;font-size:14.3px;line-height:14.3px;color:#454545;font-weight:normal;white-space:nowrap;"></div>
<div style="right:601.40px;top:442.90px;font-size:14.3px;line-height:14.3px;color:#454545;font-weight:normal;white-space:nowrap;text-align:right;">Volksbank</div>
<div style="left:1507.40px;top:442.90px;font-size:14.3px;line-height:14.3px;color:#454545;font-weight:normal;white-space:nowrap;">07.06.2010 16:43</div>
<div style="right:4.00px;top:442.90px;font-size:14.3px;line-height:14.3px;color:#454545;font-weight:normal;white-space:nowrap;text-align:right;">0,00 €</div>
<div style="left:185px;top:189px;width:1730px;height:24px;border:1px solid #111;box-shadow:inset 0 0 0 1px #fbfbfb;box-sizing:border-box;"></div>
<div style="left:185px;top:915px;width:1731px;height:2px;background:#8c8c8c;"></div>
<div style="left:185px;top:917px;width:1731px;height:42px;background:#f9fafa;"></div>
<div style="left:187px;top:918px;width:73px;height:40px;background:#e6e6ea;border:1px solid #dcdce0;box-sizing:border-box;"></div>
<div style="left:190.00px;top:922.50px;font-size:14.3px;line-height:14.3px;color:#111;font-weight:normal;white-space:nowrap;">Anzahl =</div>
<div style="left:190.00px;top:939.30px;font-size:14.3px;line-height:14.3px;color:#111;font-weight:normal;white-space:nowrap;">11</div>
<div style="left:185px;top:959px;width:1731px;height:1px;background:#bdbdbd;"></div>
<div style="left:185px;top:960px;width:1731px;height:33px;background:#e0e0e0;"></div>
<div style="left:1914px;top:917px;width:1px;height:42px;background:#c8c8c8;"></div>
<div style="left:193px;top:964px;width:83px;height:23px;background:#d6d6d6;border:1px solid #cbcbcb;box-sizing:border-box;"></div>
<div style="left:199px;top:968px;width:29px;height:15px;background:#e0e0e0;border:1px solid #efefef;box-sizing:border-box;"></div>
<div style="left:193.50px;top:969.74px;width:40px;text-align:center;font-size:12px;line-height:12px;color:#bdbdbd;font-weight:normal;white-space:nowrap;">F2</div>
<div style="left:235.50px;top:970.63px;font-size:10.6px;line-height:10.6px;color:#707070;font-weight:normal;white-space:nowrap;">Details</div>
<div style="left:284px;top:964px;width:164px;height:23px;background:#d6d6d6;border:1px solid #cbcbcb;box-sizing:border-box;"></div>
<div style="left:290px;top:968px;width:29px;height:15px;background:#e0e0e0;border:1px solid #efefef;box-sizing:border-box;"></div>
<div style="left:284.50px;top:969.74px;width:40px;text-align:center;font-size:12px;line-height:12px;color:#bdbdbd;font-weight:normal;white-space:nowrap;">F3</div>
<div style="left:324.00px;top:970.63px;font-size:10.6px;line-height:10.6px;color:#707070;font-weight:normal;white-space:nowrap;">Weitere Funktionen…</div>
<svg style="position:absolute;left:434px;top:972px;" width="10" height="8" viewBox="0 0 10 8"><path d="M0.5 1.5 L8 1.5 L4.25 6 Z" fill="#b0b0b0"/></svg>
<div style="left:1599px;top:964px;width:78px;height:23px;background:#d6d6d6;border:1px solid #cbcbcb;box-sizing:border-box;"></div>
<div style="left:1605px;top:968px;width:29px;height:15px;background:#e0e0e0;border:1px solid #efefef;box-sizing:border-box;"></div>
<div style="left:1599.50px;top:969.74px;width:40px;text-align:center;font-size:12px;line-height:12px;color:#bdbdbd;font-weight:normal;white-space:nowrap;">F10</div>
<div style="left:1639.00px;top:970.63px;font-size:10.6px;line-height:10.6px;color:#707070;font-weight:normal;white-space:nowrap;">Neu…</div>
<div style="left:1683px;top:964px;width:108px;height:23px;background:#d6d6d6;border:1px solid #cbcbcb;box-sizing:border-box;"></div>
<div style="left:1689px;top:968px;width:29px;height:15px;background:#e0e0e0;border:1px solid #efefef;box-sizing:border-box;"></div>
<div style="left:1683.50px;top:969.74px;width:40px;text-align:center;font-size:12px;line-height:12px;color:#bdbdbd;font-weight:normal;white-space:nowrap;">F11</div>
<div style="left:1721.60px;top:970.63px;font-size:10.6px;line-height:10.6px;color:#707070;font-weight:normal;white-space:nowrap;">Bearbeiten…</div>
<div style="left:1797px;top:964px;width:113px;height:23px;background:#d6d6d6;border:1px solid #cbcbcb;box-sizing:border-box;"></div>
<div style="left:1803px;top:968px;width:29px;height:15px;background:#e0e0e0;border:1px solid #efefef;box-sizing:border-box;"></div>
<div style="left:1797.50px;top:969.74px;width:40px;text-align:center;font-size:12px;line-height:12px;color:#bdbdbd;font-weight:normal;white-space:nowrap;">F12</div>
<div style="left:1850.60px;top:970.63px;font-size:10.6px;line-height:10.6px;color:#707070;font-weight:normal;white-space:nowrap;">Löschen</div>
<div style="left:617px;top:230px;width:678px;height:532px;background:#fbfbfb;border:1px solid #8cae94;box-sizing:border-box;box-shadow:1px 2px 6px rgba(0,0,0,0.12), 2px 4px 16px rgba(0,0,0,0.16)"></div>
<div style="left:622.00px;top:237.05px;font-size:11.4px;line-height:11.4px;color:#111;font-weight:normal;white-space:nowrap;">Adresse Neu / Bearbeiten: (Nr.: 1017)</div>
<div style="left:618px;top:256px;width:676px;height:22px;background:#f4f3f3;"></div>
<div style="left:1222.80px;top:236.80px;font-size:13px;line-height:13px;color:#111;font-weight:normal;white-space:nowrap;-webkit-text-stroke:0.35px #111">?</div>
<svg style="position:absolute;left:1264px;top:236px;" width="14" height="14" viewBox="0 0 14 14"><path d="M2 2 L12 12 M12 2 L2 12" stroke="#111" stroke-width="1.05"/></svg>
<div style="left:618px;top:278px;width:674px;height:450px;background:#f3f2f2;border:1px solid #c7c7c7;box-sizing:border-box;border-bottom:none"></div>
<div style="left:619px;top:257px;width:61px;height:22px;background:#f5f5f5;border:1px solid #c7c7c7;border-bottom:none;border-top:3px solid #e7b53e;box-sizing:border-box;border-radius:2px 2px 0 0"></div>
<div style="left:628.80px;top:263.03px;font-size:10.6px;line-height:10.6px;color:#111;font-weight:normal;white-space:nowrap;">Adresse</div>
<div style="left:679.5px;top:259px;width:81.5px;height:20px;background:linear-gradient(#fdfdfd,#e4e4e4);border:1px solid #b9b9b9;border-bottom:none;box-sizing:border-box;border-radius:3px 3px 0 0"></div>
<div style="left:687.70px;top:263.93px;font-size:10.6px;line-height:10.6px;color:#111;font-weight:normal;white-space:nowrap;">Vereinsdaten</div>
<div style="left:762px;top:259px;width:117px;height:20px;background:linear-gradient(#fdfdfd,#e4e4e4);border:1px solid #b9b9b9;border-bottom:none;box-sizing:border-box;border-radius:3px 3px 0 0"></div>
<div style="left:770.00px;top:263.93px;font-size:10.6px;line-height:10.6px;color:#111;font-weight:normal;white-space:nowrap;">Beiträge &amp; Spenden</div>
<div style="left:880.8px;top:259px;width:107.20000000000005px;height:20px;background:linear-gradient(#fdfdfd,#e4e4e4);border:1px solid #b9b9b9;border-bottom:none;box-sizing:border-box;border-radius:3px 3px 0 0"></div>
<div style="left:888.30px;top:263.93px;font-size:10.6px;line-height:10.6px;color:#111;font-weight:normal;white-space:nowrap;">Bankverbindungen</div>
<div style="left:989.8px;top:259px;width:99.20000000000005px;height:20px;background:linear-gradient(#fdfdfd,#e4e4e4);border:1px solid #b9b9b9;border-bottom:none;box-sizing:border-box;border-radius:3px 3px 0 0"></div>
<div style="left:997.60px;top:263.93px;font-size:10.6px;line-height:10.6px;color:#111;font-weight:normal;white-space:nowrap;">Ansprechpartner</div>
<div style="left:1090.7px;top:259px;width:105.29999999999995px;height:20px;background:linear-gradient(#fdfdfd,#e4e4e4);border:1px solid #b9b9b9;border-bottom:none;box-sizing:border-box;border-radius:3px 3px 0 0"></div>
<div style="left:1098.80px;top:263.93px;font-size:10.6px;line-height:10.6px;color:#111;font-weight:normal;white-space:nowrap;">Individuelle Felder</div>
<div style="left:1257px;top:259px;width:33px;height:17px;background:#f4f4f4;border:1px solid #d2d2d2;box-sizing:border-box;"></div>
<div style="left:1273px;top:260px;width:1px;height:15px;background:#d2d2d2;"></div>
<svg style="position:absolute;left:1259px;top:262px;" width="30" height="12" viewBox="0 0 30 12"><path d="M8 6 L4.5 6 L8 2 L8 10 L4 6 Z" fill="#b8b8b8"/><path d="M19.5 2 L24 6 L19.5 10 Z" fill="#111"/></svg>
<div style="left:626px;top:299px;width:338px;height:28px;background:#e3e3e8;border:1px solid #cfd0d6;box-sizing:border-box;border-radius:3px"></div>
<div style="left:633.20px;top:307.53px;font-size:10.6px;line-height:10.6px;color:#111;font-weight:normal;white-space:nowrap;">Adressnummer:</div>
<div style="left:722px;top:302px;width:73px;height:21px;background:#fff;border:1px solid #7a7a7a;box-sizing:border-box;"></div>
<div style="left:725.00px;top:305.64px;font-size:12px;line-height:12px;color:#000;font-weight:bold;white-space:nowrap;">1017</div>
<svg style="position:absolute;left:808.7px;top:307px;" width="14" height="14" viewBox="0 0 14 14"><circle cx="7" cy="7" r="5.8" fill="#fff" stroke="#5a5a5a" stroke-width="1"/></svg>
<div style="left:827.00px;top:308.63px;font-size:10.6px;line-height:10.6px;color:#111;font-weight:normal;white-space:nowrap;">Firma</div>
<svg style="position:absolute;left:862.5px;top:307px;" width="14" height="14" viewBox="0 0 14 14"><circle cx="7" cy="7" r="5.8" fill="#fff" stroke="#5a5a5a" stroke-width="1"/><circle cx="7" cy="7" r="3" fill="#333"/></svg>
<div style="left:880.80px;top:308.63px;font-size:10.6px;line-height:10.6px;color:#111;font-weight:normal;white-space:nowrap;">Person / Familie</div>
<div style="left:971px;top:299px;width:312px;height:28px;background:#e3e3e8;border:1px solid #cfd0d6;box-sizing:border-box;border-radius:3px"></div>
<div style="left:977.90px;top:307.53px;font-size:10.6px;line-height:10.6px;color:#111;font-weight:normal;white-space:nowrap;">Anzeigen in Liste(n):</div>
<svg style="position:absolute;left:1085.5px;top:307px;" width="14" height="14" viewBox="0 0 14 14"><circle cx="7" cy="7" r="5.8" fill="#fff" stroke="#5a5a5a" stroke-width="1"/></svg>
<div style="left:1103.20px;top:308.63px;font-size:10.6px;line-height:10.6px;color:#111;font-weight:normal;white-space:nowrap;">Kontakte</div>
<svg style="position:absolute;left:1153.5px;top:307px;" width="14" height="14" viewBox="0 0 14 14"><circle cx="7" cy="7" r="5.8" fill="#fff" stroke="#5a5a5a" stroke-width="1"/><circle cx="7" cy="7" r="3" fill="#333"/></svg>
<div style="left:1171.50px;top:308.63px;font-size:10.6px;line-height:10.6px;color:#111;font-weight:normal;white-space:nowrap;">Mitglieder</div>
<svg style="position:absolute;left:1224.3px;top:307px;" width="14" height="14" viewBox="0 0 14 14"><circle cx="7" cy="7" r="5.8" fill="#fff" stroke="#5a5a5a" stroke-width="1"/></svg>
<div style="left:1242.30px;top:308.63px;font-size:10.6px;line-height:10.6px;color:#111;font-weight:normal;white-space:nowrap;">Beiden</div>
<div style="left:627px;top:341px;width:337px;height:196px;border:1px solid #dadada;box-sizing:border-box;border-radius:3px"></div>
<div style="left:635.8px;top:339px;width:56.03353125px;height:5px;background:#f3f2f2;"></div>
<div style="left:638.80px;top:336.95px;font-size:11.4px;line-height:11.4px;color:#111;font-weight:bold;white-space:nowrap;">Anschrift</div>
<div style="left:636.30px;top:360.83px;font-size:10.6px;line-height:10.6px;color:#111;font-weight:normal;white-space:nowrap;">Anrede:</div>
<div style="left:748.40px;top:360.83px;font-size:10.6px;line-height:10.6px;color:#111;font-weight:normal;white-space:nowrap;">Titel:</div>
<div style="left:636.00px;top:403.73px;font-size:10.6px;line-height:10.6px;color:#111;font-weight:normal;white-space:nowrap;">Nachname:</div>
<div style="left:858.80px;top:403.73px;font-size:10.6px;line-height:10.6px;color:#111;font-weight:normal;white-space:nowrap;">Vorname:</div>
<div style="left:636.00px;top:446.83px;font-size:10.6px;line-height:10.6px;color:#111;font-weight:normal;white-space:nowrap;">Straße:</div>
<div style="left:636.00px;top:490.03px;font-size:10.6px;line-height:10.6px;color:#111;font-weight:normal;white-space:nowrap;">Land:</div>
<div style="left:700.40px;top:490.03px;font-size:10.6px;line-height:10.6px;color:#111;font-weight:normal;white-space:nowrap;">PLZ:</div>
<div style="left:756.70px;top:490.03px;font-size:10.6px;line-height:10.6px;color:#111;font-weight:normal;white-space:nowrap;">Ort:</div>
<div style="left:636px;top:375px;width:97px;height:21px;background:#fff;border:1px solid #5c6fb7;box-sizing:border-box;"></div>
<div style="left:639px;top:379px;width:1px;height:13px;background:#111;"></div>
<svg style="position:absolute;left:719px;top:382px;" width="11" height="8" viewBox="0 0 11 8"><path d="M1 1.5 L5 5.5 L9 1.5" fill="none" stroke="#333" stroke-width="1.1"/></svg>
<div style="left:748px;top:375px;width:97px;height:21px;background:#fff;border:1px solid #7d7d7d;box-sizing:border-box;"></div>
<svg style="position:absolute;left:831px;top:382px;" width="11" height="8" viewBox="0 0 11 8"><path d="M1 1.5 L5 5.5 L9 1.5" fill="none" stroke="#333" stroke-width="1.1"/></svg>
<div style="left:636px;top:418px;width:216px;height:21px;background:#fff;border:1px solid #7d7d7d;box-sizing:border-box;"></div>
<div style="left:859px;top:418px;width:97px;height:21px;background:#fff;border:1px solid #7d7d7d;box-sizing:border-box;"></div>
<div style="left:636px;top:461px;width:321px;height:21px;background:#fff;border:1px solid #7d7d7d;box-sizing:border-box;"></div>
<div style="left:636px;top:504px;width:57px;height:21px;background:#fff;border:1px solid #7d7d7d;box-sizing:border-box;"></div>
<div style="left:638.50px;top:509.63px;font-size:10.6px;line-height:10.6px;color:#111;font-weight:normal;white-space:nowrap;">D</div>
<svg style="position:absolute;left:679px;top:511px;" width="11" height="8" viewBox="0 0 11 8"><path d="M1 1.5 L5 5.5 L9 1.5" fill="none" stroke="#333" stroke-width="1.1"/></svg>
<div style="left:701px;top:504px;width:47px;height:21px;background:#fff;border:1px solid #7d7d7d;box-sizing:border-box;"></div>
<div style="left:757px;top:504px;width:199px;height:21px;background:#fff;border:1px solid #7d7d7d;box-sizing:border-box;"></div>
<div style="left:971px;top:341px;width:313px;height:196px;border:1px solid #dadada;box-sizing:border-box;border-radius:3px"></div>
<div style="left:979.3px;top:339px;width:92.1305625px;height:5px;background:#f3f2f2;"></div>
<div style="left:982.30px;top:336.95px;font-size:11.4px;line-height:11.4px;color:#111;font-weight:bold;white-space:nowrap;">Kommunikation</div>
<div style="left:979.20px;top:360.83px;font-size:10.6px;line-height:10.6px;color:#111;font-weight:normal;white-space:nowrap;">Telefon 1:</div>
<div style="left:1130.50px;top:360.83px;font-size:10.6px;line-height:10.6px;color:#111;font-weight:normal;white-space:nowrap;">Telefon 2:</div>
<div style="left:979.20px;top:403.73px;font-size:10.6px;line-height:10.6px;color:#111;font-weight:normal;white-space:nowrap;">Fax:</div>
<div style="left:1130.50px;top:403.73px;font-size:10.6px;line-height:10.6px;color:#111;font-weight:normal;white-space:nowrap;">Mobiltelefon:</div>
<div style="left:979.00px;top:446.83px;font-size:10.6px;line-height:10.6px;color:#111;font-weight:normal;white-space:nowrap;">E-Mail:</div>
<div style="left:978.50px;top:490.03px;font-size:10.6px;line-height:10.6px;color:#111;font-weight:normal;white-space:nowrap;">Homepage:</div>
<div style="left:979px;top:375.5px;width:144px;height:20.5px;background:#fff;border:1px solid #7d7d7d;box-sizing:border-box;"></div>
<div style="left:1131px;top:375.5px;width:144px;height:20.5px;background:#fff;border:1px solid #7d7d7d;box-sizing:border-box;"></div>
<div style="left:979px;top:418px;width:144px;height:21px;background:#fff;border:1px solid #7d7d7d;box-sizing:border-box;"></div>
<div style="left:1131px;top:418px;width:144px;height:21px;background:#fff;border:1px solid #7d7d7d;box-sizing:border-box;"></div>
<div style="left:979px;top:461px;width:206px;height:21px;background:#fff;border:1px solid #7d7d7d;box-sizing:border-box;"></div>
<div style="left:1192.60px;top:465.03px;font-size:10.6px;line-height:10.6px;color:#777;font-weight:normal;white-space:nowrap;text-decoration:underline">E-Mail senden…</div>
<div style="left:978px;top:504px;width:297px;height:21px;background:#fff;border:1px solid #7d7d7d;box-sizing:border-box;"></div>
<div style="left:627px;top:548px;width:290px;height:169px;border:1px solid #dadada;box-sizing:border-box;border-radius:3px"></div>
<div style="left:632.3px;top:546px;width:30.684562500000002px;height:5px;background:#f3f2f2;"></div>
<div style="left:635.30px;top:543.95px;font-size:11.4px;line-height:11.4px;color:#111;font-weight:bold;white-space:nowrap;">Foto</div>
<div style="left:661px;top:565px;width:108px;height:141px;background:#fff;border:1px solid #8a8a8a;box-sizing:border-box;"></div>
<div style="left:663.20px;top:629.28px;font-size:11.6px;line-height:11.6px;color:#3b3bc4;font-weight:bold;white-space:nowrap;">nichts gespeichert</div>
<div style="left:784.40px;top:561.53px;font-size:10.6px;line-height:10.6px;color:#111;font-weight:normal;white-space:nowrap;">Fügen Sie hier der</div>
<div style="left:784.40px;top:574.53px;font-size:10.6px;line-height:10.6px;color:#111;font-weight:normal;white-space:nowrap;">Adresse ein Foto hinzu.</div>
<div style="left:784.40px;top:600.53px;font-size:10.6px;line-height:10.6px;color:#111;font-weight:normal;white-space:nowrap;">Dateiformat: Jpg-Datei</div>
<div style="left:784.40px;top:613.63px;font-size:10.6px;line-height:10.6px;color:#111;font-weight:normal;white-space:nowrap;">max. Größe:</div>
<div style="left:784.40px;top:626.63px;font-size:10.6px;line-height:10.6px;color:#111;font-weight:normal;white-space:nowrap;">400 x 500 Pixel</div>
<div style="left:784px;top:651px;width:113px;height:24px;background:#e1e1e1;border:1px solid #adadad;box-sizing:border-box;"></div>
<div style="left:740.50px;top:657.83px;width:200px;text-align:center;font-size:10.6px;line-height:10.6px;color:#111;font-weight:normal;white-space:nowrap;">Einfügen</div>
<div style="left:784px;top:683.5px;width:113px;height:23.5px;background:#e1e1e1;border:1px solid #adadad;box-sizing:border-box;"></div>
<div style="left:740.50px;top:690.03px;width:200px;text-align:center;font-size:10.6px;line-height:10.6px;color:#111;font-weight:normal;white-space:nowrap;">Löschen</div>
<div style="left:926px;top:548px;width:358px;height:169px;border:1px solid #dadada;box-sizing:border-box;border-radius:3px"></div>
<div style="left:934px;top:546px;width:60.4741875px;height:5px;background:#f3f2f2;"></div>
<div style="left:937.00px;top:543.95px;font-size:11.4px;line-height:11.4px;color:#111;font-weight:bold;white-space:nowrap;">Sonstiges</div>
<div style="left:936.60px;top:562.73px;font-size:10.6px;line-height:10.6px;color:#111;font-weight:normal;white-space:nowrap;">Kategorie:</div>
<div style="left:936.60px;top:605.33px;font-size:10.6px;line-height:10.6px;color:#111;font-weight:normal;white-space:nowrap;">Debitorennummer:</div>
<div style="left:1157.80px;top:605.33px;font-size:10.6px;line-height:10.6px;color:#111;font-weight:normal;white-space:nowrap;">Geburtsdatum:</div>
<div style="left:936.60px;top:645.53px;font-size:10.6px;line-height:10.6px;color:#111;font-weight:normal;white-space:nowrap;">Geschlecht:</div>
<div style="left:1157.80px;top:645.53px;font-size:10.6px;line-height:10.6px;color:#111;font-weight:normal;white-space:nowrap;">Familienstand:</div>
<div style="left:937.00px;top:692.83px;font-size:10.6px;line-height:10.6px;color:#111;font-weight:normal;white-space:nowrap;">Adresse einbeziehen bei:</div>
<div style="left:937px;top:575.5px;width:278px;height:21.5px;background:linear-gradient(#e8e8e8,#dedede);border:1px solid #bdbdbd;box-sizing:border-box;"></div>
<div style="left:941.30px;top:581.53px;font-size:10.6px;line-height:10.6px;color:#111;font-weight:normal;white-space:nowrap;">(keine Angabe)</div>
<svg style="position:absolute;left:1201px;top:583px;" width="11" height="8" viewBox="0 0 11 8"><path d="M1 1.5 L5 5.5 L9 1.5" fill="none" stroke="#333" stroke-width="1.1"/></svg>
<div style="left:1227px;top:575.5px;width:46px;height:21.5px;background:#e1e1e1;border:1px solid #b5b5b5;box-sizing:border-box;"></div>
<div style="left:1150.00px;top:581.53px;width:200px;text-align:center;font-size:10.6px;line-height:10.6px;color:#111;font-weight:normal;white-space:nowrap;">Neu…</div>
<div style="left:937px;top:619px;width:94px;height:21px;background:#fff;border:1px solid #7d7d7d;box-sizing:border-box;"></div>
<div style="left:1158px;top:618.5px;width:113px;height:20.5px;background:#fff;border:1px solid #7d7d7d;box-sizing:border-box;"></div>
<svg style="position:absolute;left:1256px;top:624.5px;" width="11" height="8" viewBox="0 0 11 8"><path d="M1 1.5 L5 5.5 L9 1.5" fill="none" stroke="#333" stroke-width="1.1"/></svg>
<div style="left:937px;top:659px;width:159px;height:21px;background:linear-gradient(#e8e8e8,#dedede);border:1px solid #bdbdbd;box-sizing:border-box;"></div>
<div style="left:941.30px;top:664.03px;font-size:10.6px;line-height:10.6px;color:#111;font-weight:normal;white-space:nowrap;">(keine Angabe)</div>
<svg style="position:absolute;left:1082px;top:665.5px;" width="11" height="8" viewBox="0 0 11 8"><path d="M1 1.5 L5 5.5 L9 1.5" fill="none" stroke="#333" stroke-width="1.1"/></svg>
<div style="left:1158px;top:659px;width:113px;height:21px;background:linear-gradient(#e8e8e8,#dedede);border:1px solid #bdbdbd;box-sizing:border-box;"></div>
<div style="left:1162.00px;top:664.03px;font-size:10.6px;line-height:10.6px;color:#111;font-weight:normal;white-space:nowrap;">(keine Angabe)</div>
<svg style="position:absolute;left:1256px;top:665.5px;" width="11" height="8" viewBox="0 0 11 8"><path d="M1 1.5 L5 5.5 L9 1.5" fill="none" stroke="#333" stroke-width="1.1"/></svg>
<svg style="position:absolute;left:1071px;top:692px;" width="13" height="12" viewBox="0 0 13 12"><rect x="0.5" y="0.5" width="12" height="11" fill="#fff" stroke="#555"/><path d="M2.5 6 L5 8.8 L10.5 2.5" fill="none" stroke="#222" stroke-width="1.2"/></svg>
<div style="left:1086.80px;top:692.83px;font-size:10.6px;line-height:10.6px;color:#111;font-weight:normal;white-space:nowrap;">Serienbriefen</div>
<svg style="position:absolute;left:1167px;top:692px;" width="13" height="12" viewBox="0 0 13 12"><rect x="0.5" y="0.5" width="12" height="11" fill="#fff" stroke="#555"/><path d="M2.5 6 L5 8.8 L10.5 2.5" fill="none" stroke="#222" stroke-width="1.2"/></svg>
<div style="left:1182.70px;top:692.83px;font-size:10.6px;line-height:10.6px;color:#111;font-weight:normal;white-space:nowrap;">E-Mail-Newsletter</div>
<div style="left:618px;top:727px;width:674px;height:1px;background:#8e8e8e;"></div>
<div style="left:618px;top:728px;width:676px;height:33px;background:#e9e9e9;"></div>
<div style="left:625px;top:734.5px;width:164px;height:22.5px;background:#e6e6e6;border:1px solid #b5b5b5;box-sizing:border-box;"></div>
<div style="left:631px;top:738px;width:29px;height:14.5px;background:#7b8a96;"></div>
<div style="left:625.50px;top:740.84px;width:40px;text-align:center;font-size:12px;line-height:12px;color:#f6f8fa;font-weight:normal;white-space:nowrap;">F3</div>
<div style="left:664.90px;top:740.73px;font-size:10.6px;line-height:10.6px;color:#111;font-weight:normal;white-space:nowrap;">Weitere Funktionen…</div>
<svg style="position:absolute;left:774.5px;top:742px;" width="10" height="8" viewBox="0 0 10 8"><path d="M0.5 1.5 L7.5 1.5 L4 6 Z" fill="#111"/></svg>
<div style="left:870.5px;top:734.5px;width:104.5px;height:22.5px;background:#d5d5d5;border:1px solid #d5d5d5;box-sizing:border-box;"></div>
<div style="left:877px;top:738px;width:28px;height:15px;background:#dddddd;border:1px solid #ececec;box-sizing:border-box;"></div>
<div style="left:871.00px;top:740.84px;width:40px;text-align:center;font-size:12px;line-height:12px;color:#c2c2c2;font-weight:normal;white-space:nowrap;">F5</div>
<div style="left:915.70px;top:740.73px;font-size:10.6px;line-height:10.6px;color:#9a9a9a;font-weight:normal;white-space:nowrap;">Vorheriger</div>
<div style="left:980px;top:734.5px;width:106px;height:22.5px;background:#e6e6e6;border:1px solid #b5b5b5;box-sizing:border-box;"></div>
<div style="left:986px;top:738px;width:29px;height:14.5px;background:#7b8a96;"></div>
<div style="left:980.50px;top:740.84px;width:40px;text-align:center;font-size:12px;line-height:12px;color:#f6f8fa;font-weight:normal;white-space:nowrap;">F6</div>
<div style="left:1028.40px;top:740.73px;font-size:10.6px;line-height:10.6px;color:#111;font-weight:normal;white-space:nowrap;">Nächster</div>
<div style="left:1097px;top:734.5px;width:83px;height:22.5px;background:#e6e6e6;border:1px solid #b5b5b5;box-sizing:border-box;"></div>
<div style="left:1103px;top:738px;width:29px;height:14.5px;background:#7b8a96;"></div>
<div style="left:1097.50px;top:740.84px;width:40px;text-align:center;font-size:12px;line-height:12px;color:#f6f8fa;font-weight:normal;white-space:nowrap;">F11</div>
<div style="left:1148.30px;top:740.73px;font-size:10.6px;line-height:10.6px;color:#111;font-weight:normal;white-space:nowrap;">OK</div>
<div style="left:1184px;top:734.5px;width:105px;height:22.5px;background:#e6e6e6;border:1px solid #b5b5b5;box-sizing:border-box;"></div>
<div style="left:1190px;top:738px;width:29px;height:14.5px;background:#7b8a96;"></div>
<div style="left:1184.50px;top:740.84px;width:40px;text-align:center;font-size:12px;line-height:12px;color:#f6f8fa;font-weight:normal;white-space:nowrap;">F12</div>
<div style="left:1227.60px;top:740.73px;font-size:10.6px;line-height:10.6px;color:#111;font-weight:normal;white-space:nowrap;">Abbrechen</div>
</body></html>
